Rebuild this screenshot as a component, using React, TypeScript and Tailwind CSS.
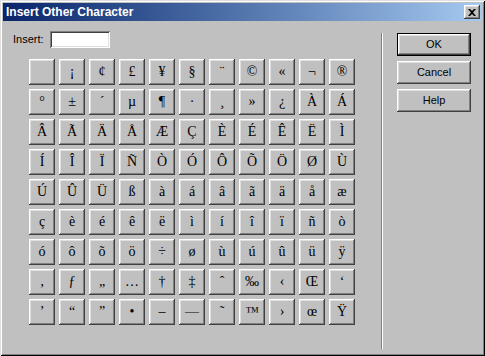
import React from "react";

const rows: string[][] = [
  ["", "¡", "¢", "£", "¥", "§", "¨", "©", "«", "¬", "®"],
  ["°", "±", "´", "µ", "¶", "·", "¸", "»", "¿", "À", "Á"],
  ["Â", "Ã", "Ä", "Å", "Æ", "Ç", "È", "É", "Ê", "Ë", "Ì"],
  ["Í", "Î", "Ï", "Ñ", "Ò", "Ó", "Ô", "Õ", "Ö", "Ø", "Ù"],
  ["Ú", "Û", "Ü", "ß", "à", "á", "â", "ã", "ä", "å", "æ"],
  ["ç", "è", "é", "ê", "ë", "ì", "í", "î", "ï", "ñ", "ò"],
  ["ó", "ô", "õ", "ö", "÷", "ø", "ù", "ú", "û", "ü", "ÿ"],
  ["‚", "ƒ", "„", "…", "†", "‡", "ˆ", "‰", "‹", "Œ", "‘"],
  ["’", "“", "”", "•", "–", "—", "˜", "™", "›", "œ", "Ÿ"],
];

const raised =
  "shadow-[inset_-1px_-1px_#404040,inset_1px_1px_#ffffff,inset_-2px_-2px_#808080,inset_2px_2px_#dfdfdf]";

function DlgButton({ label, isDefault }: { label: string; isDefault?: boolean }) {
  return (
    <div className="h-[23px] w-[74px] bg-[#c0c0c0] flex items-center justify-center text-[11px] text-black">
      <div className={`w-full h-full flex items-center justify-center ${raised} ${isDefault ? "border border-black" : ""}`}>
        {label}
      </div>
    </div>
  );
}

export default function App() {
  return (
    <div
      className="w-[485px] h-[356px] bg-[#c0c0c0] p-[3px] flex flex-col shadow-[inset_1px_1px_#dfdfdf,inset_-1px_-1px_#000000,inset_2px_2px_#ffffff,inset_-2px_-2px_#808080] overflow-hidden"
      style={{ fontFamily: '"Liberation Sans", Arial, sans-serif' }}
    >
      {/* Title bar */}
      <div className="h-[18px] bg-linear-to-r from-[#0a246a] to-[#a6caf0] flex items-center pl-[3px] pr-[2px]">
        <span className="text-white font-bold text-[12px] leading-none">Insert Other Character</span>
        <div className={`ml-auto w-[16px] h-[14px] bg-[#c0c0c0] flex items-center justify-center ${raised}`}>
          <svg width="8" height="7" viewBox="0 0 8 7">
            <path d="M0 0h2l2 2 2-2h2L5 3.5 8 7H6L4 5 2 7H0l3-3.5z" fill="#000" />
          </svg>
        </div>
      </div>

      {/* Body */}
      <div className="flex flex-1">
        <div className="flex flex-col pl-[10px] pt-[10px] w-[378px]">
          <div className="flex items-center h-[17px]">
            <span className="text-[11px] text-black w-[37px]">Insert:</span>
            <div className="w-[60px] h-[17px] bg-white shadow-[inset_1px_1px_#808080,inset_-1px_-1px_#ffffff,inset_2px_2px_#404040,inset_-2px_-2px_#dfdfdf]" />
          </div>
          <div
            className="mt-[11px] ml-[16px] grid grid-cols-[repeat(11,26px)] auto-rows-[26px] gap-[4px]"
            style={{ fontFamily: '"Liberation Serif", "Times New Roman", serif' }}
          >
            {rows.flat().map((ch, i) => (
              <div
                key={i}
                className={`bg-[#c0c0c0] flex items-center justify-center text-[14px] text-black leading-none ${raised}`}
              >
                {ch}
              </div>
            ))}
          </div>
        </div>

        {/* Separator */}
        <div className="mt-[12px] mb-[4px] w-[2px] flex">
          <div className="w-px bg-[#808080]" />
          <div className="w-px bg-white" />
        </div>

        {/* Buttons */}
        <div className="flex flex-col gap-[5px] pt-[12px] pl-[14px]">
          <DlgButton label="OK" isDefault />
          <DlgButton label="Cancel" />
          <DlgButton label="Help" />
        </div>
      </div>
    </div>
  );
}
